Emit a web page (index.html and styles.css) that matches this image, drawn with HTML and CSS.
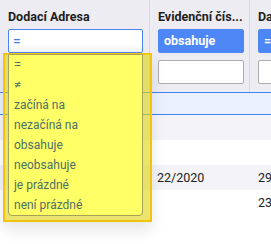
FILE: index.html
```html
<!DOCTYPE html>
<html lang="cs">
<head>
<meta charset="utf-8">
<link rel="stylesheet" href="styles.css">
</head>
<body>
<div class="grid">
  <div class="head">
    <div class="hcol c1">
      <div class="title">Dodací Adresa</div>
      <div class="sel open">=</div>
      <div class="inp"></div>
    </div>
    <div class="hcol c2">
      <div class="title">Evidenční čís...</div>
      <div class="sel filled">obsahuje</div>
      <div class="inp"></div>
    </div>
    <div class="hcol c3">
      <div class="title">Datum</div>
      <div class="sel filled">=</div>
      <div class="inp"></div>
    </div>
  </div>
  <div class="band"></div>
  <div class="rows">
    <div class="row alt"><div class="cell c1"></div><div class="cell c2"></div><div class="cell c3"></div></div>
    <div class="row"><div class="cell c1"></div><div class="cell c2"></div><div class="cell c3"></div></div>
    <div class="row alt"><div class="cell c1"></div><div class="cell c2">22/2020</div><div class="cell c3">29</div></div>
    <div class="row"><div class="cell c1"></div><div class="cell c2"></div><div class="cell c3">23</div></div>
  </div>
  <div class="highlight">
    <ul class="menu">
      <li class="sym">=</li>
      <li class="sym">≠</li>
      <li>začíná na</li>
      <li>nezačíná na</li>
      <li>obsahuje</li>
      <li>neobsahuje</li>
      <li>je prázdné</li>
      <li>není prázdné</li>
    </ul>
  </div>
</div>
</body>
</html>
```
FILE: styles.css
```css
html, body {
  margin: 0;
  padding: 0;
  background: #ffffff;
  overflow: hidden;
}
body {
  font-family: Roboto, "Liberation Sans", Arial, sans-serif;
  font-size: 12.5px;
  color: #222;
}
.grid {
  position: relative;
  width: 271px;
  height: 244px;
  overflow: hidden;
}
.head {
  display: grid;
  grid-template-columns: 150px 100px 150px;
  background: #ececf2;
  height: 92px;
}
.hcol {
  display: flex;
  flex-direction: column;
  padding: 9px 6px 0 8px;
  border-right: 1px solid #dadae2;
  box-sizing: border-box;
  white-space: nowrap;
}
.title {
  font-weight: 700;
  height: 15px;
  line-height: 15px;
  color: #1e1e1e;
  margin-bottom: 5px;
}
.c1 .sel, .c1 .inp { width: 135px; }
.c2 .sel, .c2 .inp, .c3 .sel, .c3 .inp { width: 86px; }
.sel {
  box-sizing: border-box;
  height: 24px;
  line-height: 22px;
  border-radius: 2px;
  padding: 0 5px;
  margin-bottom: 7px;
}
.sel.open {
  background: linear-gradient(#ffffff 60%, #f3f3f6);
  border: 1px solid #4a86f0;
  color: #3d78ef;
  padding-left: 4px;
  font-size: 14px;
}
.sel.filled {
  background: #4d87f5;
  border: 1px solid #4d87f5;
  color: #ffffff;
  font-weight: 700;
}
.inp {
  box-sizing: border-box;
  height: 24px;
  background: #ffffff;
  border: 1px solid #ababab;
  border-radius: 2px;
}
.band {
  height: 21px;
  background: #eaf1fd;
  border-top: 1px solid #3f82f4;
  border-bottom: 1px solid #3f82f4;
}
.row {
  display: grid;
  grid-template-columns: 150px 100px 150px;
  height: 25px;
  line-height: 25px;
}
.row.alt { background: #f4f4f8; }
.cell.c2 { padding-left: 7px; }
.cell.c3 { padding-left: 8px; }
.highlight {
  position: absolute;
  left: 3px;
  top: 53px;
  width: 149px;
  height: 169px;
  box-sizing: border-box;
  border: 2px solid #f2c40c;
  background: rgba(222, 212, 20, 0.62);
  box-shadow: 0 8px 14px rgba(0, 0, 0, 0.10);
}
.menu {
  list-style: none;
  margin: -1px 0 0 3px;
  padding: 0;
  width: 135px;
  box-sizing: border-box;
  background: #ffff66;
  border: 1px solid #a5a25c;
  border-radius: 0 0 4px 4px;
}
.menu li {
  height: 20px;
  line-height: 20px;
  padding-left: 5px;
  font-size: 12px;
  color: #4d7068;
}
.menu li.sym {
  font-size: 13px;
}
```
